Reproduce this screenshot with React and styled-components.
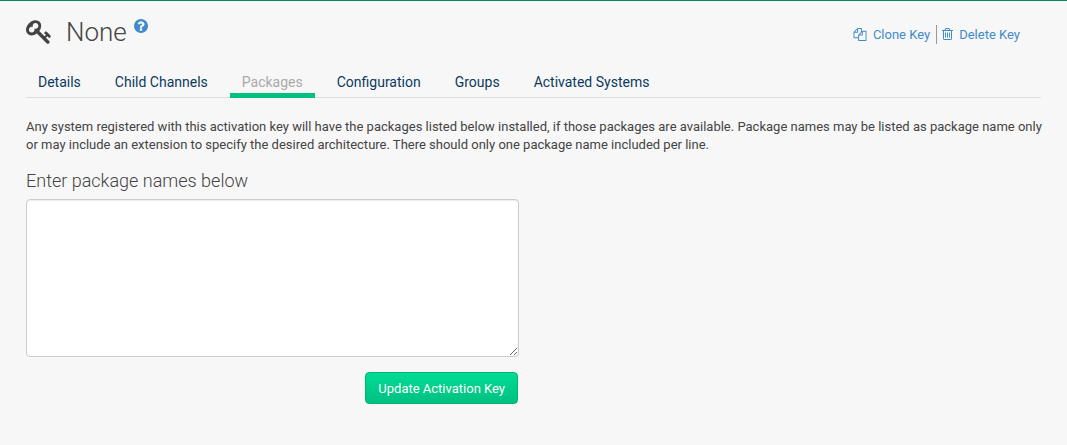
import React from "react";
import styled, { createGlobalStyle } from "styled-components";

const GlobalStyle = createGlobalStyle`
  *, *::before, *::after { box-sizing: border-box; }
  html { background: #f7f7f7; }
  body {
    margin: 0;
    border-top: 1px solid #00895e;
    background: #f7f7f7;
    color: #444;
    font: 13px/18px Roboto, "Liberation Sans", sans-serif;
  }
`;

const Page = styled.main`
  padding: 16px 26px;
`;

const Header = styled.header`
  display: flex;
  justify-content: space-between;
  align-items: flex-start;
`;

const Title = styled.h1`
  display: flex;
  align-items: flex-start;
  margin: 0;
  font-size: 26px;
  line-height: 30px;
  font-weight: 300;
`;

const TitleText = styled.span`
  margin: 0 7px 0 15px;
`;

const Icon = styled.svg`
  display: block;
  flex: none;
  width: ${(p) => p.$width}px;
  height: ${(p) => p.$height}px;
  fill: currentColor;
`;

const KeyIcon = styled(Icon)`
  margin-top: 3px;
`;

const HelpLink = styled.a`
  margin-top: 2px;
  color: #428bca;
`;

const Toolbar = styled.div`
  display: flex;
  padding: 8px 21px 0 0;
`;

const ToolIcon = styled(Icon)`
  margin-bottom: 2px;
`;

const ToolLink = styled.a`
  display: flex;
  align-items: center;
  gap: 6px;
  padding-top: 1px;
  color: #428bca;
  text-decoration: none;

  & + & {
    margin-left: 6px;
    padding-left: 5px;
    border-left: 1px solid #999;
  }
`;

const Tabs = styled.nav`
  display: flex;
  gap: 10px;
  margin-top: 25px;
  border-bottom: 1px solid #ddd;
`;

const Tab = styled.a`
  padding: 0 12px 1px;
  margin-bottom: -1px;
  border-bottom: 5px solid ${(p) => (p.$active ? "#00c081" : "transparent")};
  color: ${(p) => (p.$active ? "#aaa" : "#0b3a60")};
  font-size: 14px;
  line-height: 20px;
  text-decoration: none;
`;

const Intro = styled.p`
  margin: 20px -4px 17px 0;
`;

const Form = styled.form`
  width: 493px;
  max-width: 100%;
`;

const Label = styled.label`
  display: block;
  margin-bottom: 8px;
  font-size: 18px;
  line-height: 20px;
  font-weight: 300;
`;

const TextArea = styled.textarea`
  display: block;
  width: 100%;
  height: 158px;
  padding: 6px 12px;
  border: 1px solid #ccc;
  border-radius: 4px;
  background: #fff;
  box-shadow: inset 0 1px 1px rgba(0, 0, 0, 0.075);
  color: #555;
  font: inherit;
`;

const Actions = styled.div`
  display: flex;
  justify-content: flex-end;
  padding: 15px 1px 0 0;
`;

const Button = styled.button`
  padding: 7px 12px 5px;
  border: 1px solid #00b679;
  border-radius: 4px;
  background: linear-gradient(#00dc94, #00c081);
  color: #fff;
  font: inherit;
  cursor: pointer;
`;

const tabs = ["Details", "Child Channels", "Packages", "Configuration", "Groups", "Activated Systems"];

const keyPath =
  "M832 512q0-80-56-136t-136-56-136 56-56 136q0 42 19 83-41-19-83-19-80 0-136 56t-56 136 56 136 136 56 136-56 56-136q0-42-19-83 41 19 83 19 80 0 136-56t56-136zm851 704q0 17-49 66t-66 49q-9 0-28.5-16t-36.5-33-38.5-40-24.5-26l-96 96 220 220q28 28 28 68 0 42-39 81t-81 39q-40 0-68-28l-671-671q-176 131-365 131-163 0-265.5-102.5t-102.5-265.5q0-160 95-313t248-248 313-95q163 0 265.5 102.5t102.5 265.5q0 189-131 365l355 355 96-96q-3-3-26-24.5t-40-38.5-33-36.5-16-28.5q0-17 49-66t66-49q13 0 23 10 6 6 46 44.5t82 79.5 86.5 86 73 78 28.5 41z";
const helpPath =
  "M1024 1376v-192q0-14-9-23t-23-9h-192q-14 0-23 9t-9 23v192q0 14 9 23t23 9h192q14 0 23-9t9-23zm256-672q0-88-55.5-163t-138.5-116-170-41q-243 0-371 213-15 24 8 42l132 100q7 6 19 6 16 0 25-12 53-68 86-92 34-24 86-24 48 0 85.5 26t37.5 59q0 38-20 61t-68 45q-63 28-115.5 86.5t-52.5 125.5v36q0 14 9 23t23 9h192q14 0 23-9t9-23q0-19 21.5-49.5t54.5-49.5q32-18 49-28.5t46-35 44.5-48 28-60.5 12.5-81zm384 192q0 209-103 385.5t-279.5 279.5-385.5 103-385.5-103-279.5-279.5-103-385.5 103-385.5 279.5-279.5 385.5-103 385.5 103 279.5 279.5 103 385.5z";
const copyPath =
  "M1696 384q40 0 68 28t28 68v1216q0 40-28 68t-68 28h-960q-40 0-68-28t-28-68v-288h-544q-40 0-68-28t-28-68v-672q0-40 20-88t48-76l408-408q28-28 76-48t88-20h416q40 0 68 28t28 68v328q68-40 128-40h416zm-544 213l-299 299h299v-299zm-640-384l-299 299h299v-299zm196 647l316-316v-416h-384v416q0 40-28 68t-68 28h-416v640h512v-256q0-40 20-88t48-76zm956 804v-1152h-384v416q0 40-28 68t-68 28h-416v640h896z";
const trashPath =
  "M704 736v576q0 14-9 23t-23 9h-64q-14 0-23-9t-9-23v-576q0-14 9-23t23-9h64q14 0 23 9t9 23zm256 0v576q0 14-9 23t-23 9h-64q-14 0-23-9t-9-23v-576q0-14 9-23t23-9h64q14 0 23 9t9 23zm256 0v576q0 14-9 23t-23 9h-64q-14 0-23-9t-9-23v-576q0-14 9-23t23-9h64q14 0 23 9t9 23zm128 724v-948h-896v948q0 22 7 40.5t14.5 27 10.5 8.5h832q3 0 10.5-8.5t14.5-27 7-40.5zm-672-1076h448l-48-117q-7-9-17-11h-317q-10 2-17 11zm928 32v64q0 14-9 23t-23 9h-96v948q0 83-47 143.5t-113 60.5h-832q-66 0-113-58.5t-47-141.5v-952h-96q-14 0-23-9t-9-23v-64q0-14 9-23t23-9h309l70-167q15-37 54-63t79-26h320q40 0 79 26t54 63l70 167h309q14 0 23 9t9 23z";

export default function App() {
  return (
    <>
      <GlobalStyle />
      <Page>
        <Header>
          <Title>
            <KeyIcon $width={25} $height={24} viewBox="0 128 1684 1592" aria-hidden="true">
              <path d={keyPath} />
            </KeyIcon>
            <TitleText>None</TitleText>
            <HelpLink href="#help" aria-label="Help">
              <Icon $width={14} $height={14} viewBox="128 128 1536 1536" aria-hidden="true">
                <path d={helpPath} />
              </Icon>
            </HelpLink>
          </Title>
          <Toolbar>
            <ToolLink href="#clone">
              <ToolIcon $width={14} $height={13} viewBox="0 0 1792 1792" aria-hidden="true">
                <path d={copyPath} />
              </ToolIcon>
              Clone Key
            </ToolLink>
            <ToolLink href="#delete">
              <ToolIcon $width={11} $height={12} viewBox="192 128 1408 1536" aria-hidden="true">
                <path d={trashPath} />
              </ToolIcon>
              Delete Key
            </ToolLink>
          </Toolbar>
        </Header>
        <Tabs>
          {tabs.map((name) => (
            <Tab
              key={name}
              href={"#" + name.toLowerCase().replace(" ", "-")}
              $active={name === "Packages"}
              aria-current={name === "Packages" ? "page" : undefined}
            >
              {name}
            </Tab>
          ))}
        </Tabs>
        <Intro>
          Any system registered with this activation key will have the packages listed below installed, if those
          packages are available. Package names may be listed as package name only or may include an extension to
          specify the desired architecture. There should only one package name included per line.
        </Intro>
        <Form onSubmit={(e) => e.preventDefault()}>
          <Label htmlFor="packages">Enter package names below</Label>
          <TextArea id="packages" name="packages" />
          <Actions>
            <Button type="submit">Update Activation Key</Button>
          </Actions>
        </Form>
      </Page>
    </>
  );
}
